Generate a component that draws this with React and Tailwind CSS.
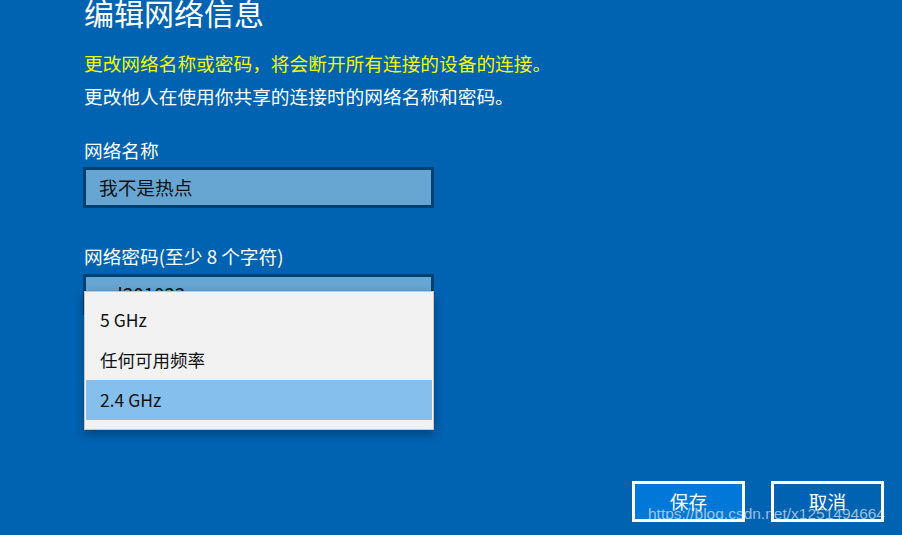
import React from 'react';

// Windows 10 style "edit hotspot network info" panel with the band dropdown open
const bands = ['5 GHz', '任何可用频率', '2.4 GHz'];

const font = { fontFamily: '"Noto Sans CJK SC", "Noto Sans", sans-serif' };

const TextBox = ({ value }) => (
  <div className="w-[351px] h-[41px] mt-[1px] border-[3px] border-[#02406f] bg-[#67a6d3] flex items-center pl-[13px] text-[18.7px] text-[#111]">
    {value}
  </div>
);

export default function App() {
  const selected = 2;

  return (
    <div
      className="relative w-[902px] h-[535px] overflow-hidden bg-[#0063b1] flex flex-col"
      style={font}
    >
      <div className="flex flex-col pl-[83px]">
        <h1 className="text-[30px] leading-[30px] text-white mt-[-3px] pl-[1px]">编辑网络信息</h1>
        <p className="text-[18.7px] leading-[33px] text-[#f8f800] mt-[19px] pl-[1px]">
          更改网络名称或密码，将会断开所有连接的设备的连接。
        </p>
        <p className="text-[18.7px] leading-[33px] text-white pl-[1px]">
          更改他人在使用你共享的连接时的网络名称和密码。
        </p>

        <label className="text-[18.7px] leading-[33px] text-white mt-[21px] pl-[1px]">网络名称</label>
        <TextBox value="我不是热点" />

        <label className="text-[18.7px] leading-[33px] text-white mt-[31px] pl-[1px]">
          网络密码(至少 8 个字符)
        </label>
        <div className="mt-[1px]">
          <TextBox value="xxl201023" />
        </div>
      </div>

      {/* band dropdown, open over the password box */}
      <div className="absolute left-[84px] top-[291px] w-[350px] h-[139px] bg-[#f2f2f2] border border-[#c6c6c6] shadow-[0_4px_10px_rgba(0,0,0,0.35)] pt-[8px] pb-[10px] px-[1px]">
        {bands.map((b, i) => (
          <div
            key={b}
            className={
              'h-[40px] flex items-center pl-[14px] text-[17.5px] text-[#111] ' +
              (i === selected ? 'bg-[#84bfee]' : '')
            }
          >
            {b}
          </div>
        ))}
      </div>

      <div className="mt-auto flex justify-end gap-[26px] pr-[18px] pb-[13px]">
        <button className="w-[113px] h-[41px] border-[3px] border-white bg-[#0078d7] text-white text-[18.7px]">
          保存
        </button>
        <button className="w-[113px] h-[41px] border-[3px] border-white text-white text-[18.7px]">
          取消
        </button>
      </div>

      {/* blog watermark */}
      <div
        className="absolute left-[648px] top-[502px] text-[15.5px] leading-[23px] text-white/60"
        style={{ fontFamily: '"Liberation Sans", Arial, sans-serif' }}
      >
        https://blog.csdn.net/x1251494664
      </div>
    </div>
  );
}
